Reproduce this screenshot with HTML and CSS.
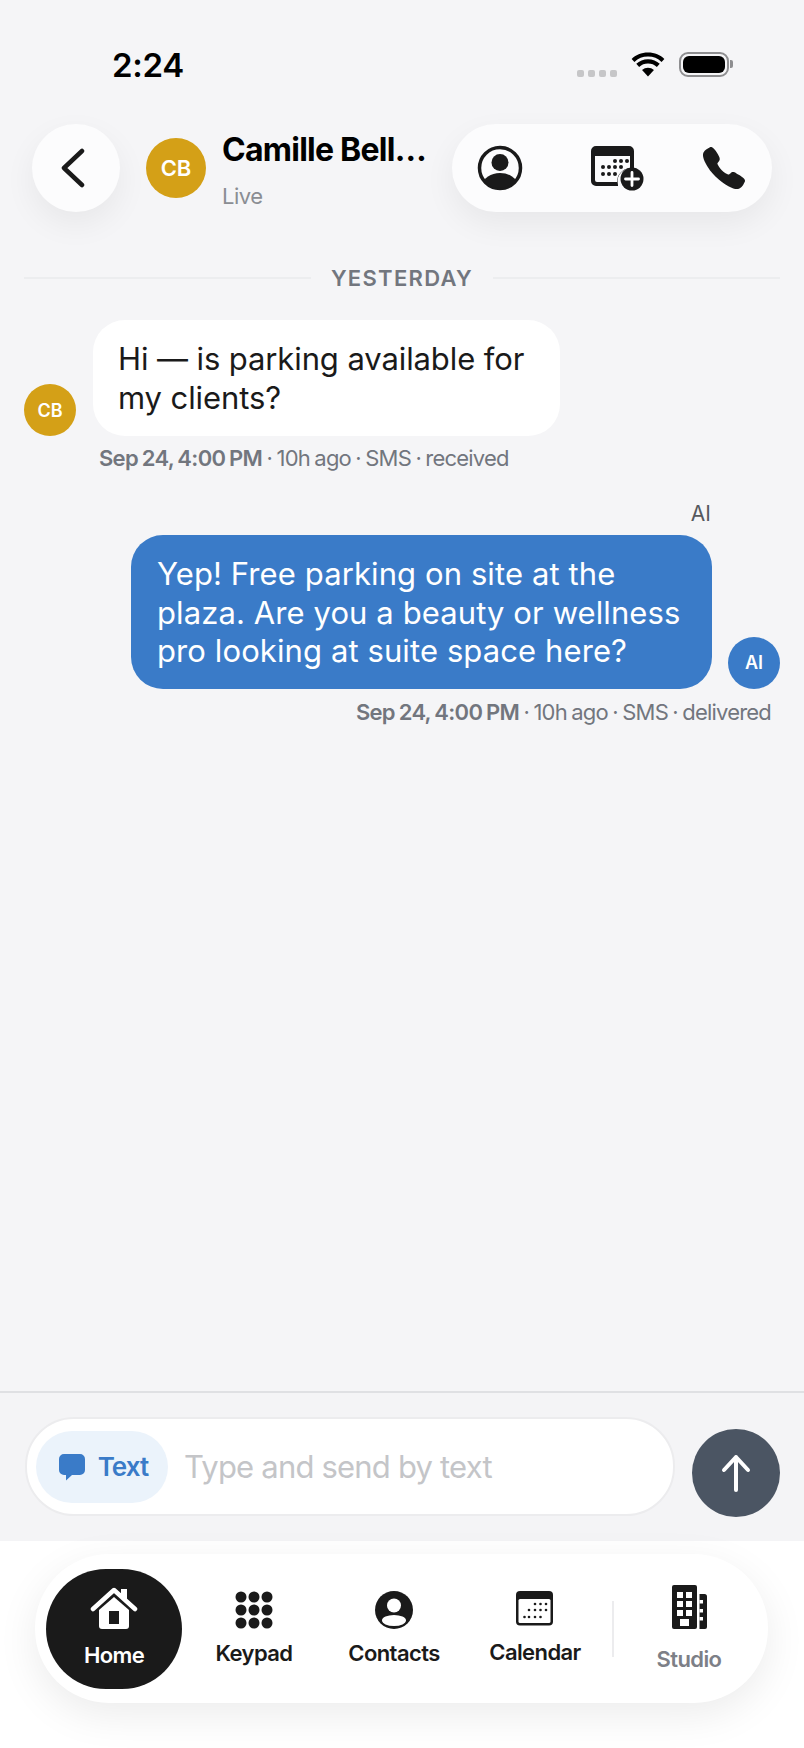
FILE: index.html
```html
<!DOCTYPE html>
<html lang="en">
<head>
<meta charset="utf-8">
<title>Camille Bell</title>
<link rel="stylesheet" href="styles.css">
</head>
<body>
<div class="screen">
  <div class="status">
    <span class="time">2:24</span>
    <div class="status-icons">
      <div class="signal"><i></i><i></i><i></i><i></i></div>
      <svg class="wifi" viewBox="0 0 34 26"><path d="M17 25.500 10.800 18.700a9.500 9.500 0 0 1 12.400 0z"/><path d="M17 8.500c4.800 0 9 1.800 12.200 4.800l-3 3.300a13.700 13.700 0 0 0-18.400 0l-3-3.300C8 10.300 12.200 8.500 17 8.500z" transform="translate(0 -1)"/><path d="M17 .5c6.900 0 13.100 2.600 17 6.800l-2.900 3.200A20 20 0 0 0 17 4.800 20 20 0 0 0 2.900 10.500L0 7.300C3.900 3.100 10.100.5 17 .5z"/></svg>
      <div class="battery"><div class="battery-fill"></div></div>
      <div class="battery-cap"></div>
    </div>
  </div>

  <header class="header">
    <button class="back" aria-label="Back">
      <svg viewBox="0 0 28 40" class="back-icon"><path d="M23 3 5 20l18 17"/></svg>
    </button>
    <div class="contact">
      <div class="avatar avatar-lg gold">CB</div>
      <div class="contact-text">
        <div class="name">Camille Bell…</div>
        <div class="live">Live</div>
      </div>
    </div>
    <div class="actions">
      <svg class="ic-person" viewBox="0 0 46 46"><defs><clipPath id="cp"><circle cx="23" cy="23" r="20"/></clipPath></defs><circle cx="23" cy="23" r="20.500" class="ring"/><circle cx="23" cy="17.500" r="8.500" class="solid"/><ellipse cx="23" cy="40" rx="17" ry="12" class="solid" clip-path="url(#cp)"/></svg>
      <svg class="ic-calplus" viewBox="0 0 54 46"><path class="solid" d="M5 1h33a5 5 0 0 1 5 5v18a13 13 0 0 0-16 16v1H5a5 5 0 0 1-5-5V6a5 5 0 0 1 5-5z"/><path d="M4 11h35v12a14 14 0 0 0-13 14H6a2 2 0 0 1-2-2z" fill="#fcfcfd"/><g class="solid"><circle cx="24" cy="16" r="2"/><circle cx="30" cy="16" r="2"/><circle cx="36" cy="16" r="2"/><circle cx="12" cy="22" r="2"/><circle cx="18" cy="22" r="2"/><circle cx="24" cy="22" r="2"/><circle cx="30" cy="22" r="2"/><circle cx="12" cy="29" r="2"/><circle cx="18" cy="29" r="2"/><circle cx="24" cy="29" r="2"/></g><circle cx="41" cy="34" r="11.500" class="solid"/><path d="M41 27.500v13M34.500 34h13" stroke="#fff" stroke-width="2.800" fill="none" stroke-linecap="round"/></svg>
      <svg class="ic-phone" viewBox="0 0 512 512"><path class="solid" d="M391 480c-19.520 0-46.940-7.060-88-30-49.930-28-88.550-53.850-138.210-103.380C116.910 298.770 93.610 267.790 61 208.450c-36.840-67-30.560-102.120-23.540-117.130C45.820 73.380 58.160 62.650 74.110 52a176.300 176.300 0 0 1 28.640-15.200c1-.43 1.930-.84 2.760-1.210 4.950-2.230 12.450-5.600 21.950-2 6.340 2.380 12 7.250 20.860 16 18.170 17.920 43 57.830 52.160 77.430 6.150 13.210 10.220 21.930 10.230 31.710 0 11.450-5.760 20.280-12.750 29.810-1.310 1.790-2.610 3.500-3.870 5.160-7.610 10-9.280 12.890-8.180 18.050 2.230 10.370 18.860 41.240 46.190 68.510s57.310 42.850 67.720 45.070c5.380 1.150 8.330-.59 18.650-8.470 1.480-1.130 3-2.300 4.590-3.470 10.660-7.930 19.080-13.540 30.260-13.540h.06c9.730 0 18.060 4.220 31.860 11.180 18 9.080 59.110 33.590 77.140 51.780 8.770 8.840 13.660 14.480 16.050 20.810 3.600 9.530.21 17-2 22-.37.830-.78 1.740-1.210 2.750a176.490 176.490 0 0 1-15.290 28.580c-10.630 15.900-21.400 28.210-39.380 36.580A67.420 67.420 0 0 1 391 480z"/></svg>
    </div>
  </header>

  <div class="day">
    <span class="day-line"></span>
    <span class="day-label">YESTERDAY</span>
    <span class="day-line"></span>
  </div>

  <main class="thread">
    <div class="msg-row">
      <div class="avatar avatar-sm gold">CB</div>
      <div class="bubble bubble-in">Hi — is parking available for<br>my clients?</div>
    </div>
    <div class="meta meta-in"><b>Sep 24, 4:00 PM</b> · 10h ago · SMS · received</div>

    <div class="sender">AI</div>
    <div class="msg-row msg-out">
      <div class="bubble bubble-out">Yep! Free parking on site at the<br>plaza. Are you a beauty or wellness<br>pro looking at suite space here?</div>
      <div class="avatar avatar-sm blue">AI</div>
    </div>
    <div class="meta meta-out"><b>Sep 24, 4:00 PM</b> · 10h ago · SMS · delivered</div>
  </main>

  <section class="composer">
    <div class="input">
      <div class="mode">
        <svg class="ic-bubble" viewBox="0 0 28 28"><path d="M6 1h16a5 5 0 0 1 5 5v11a5 5 0 0 1-5 5H14l-6 5.500V22H6a5 5 0 0 1-5-5V6a5 5 0 0 1 5-5z"/></svg>
        <span>Text</span>
      </div>
      <span class="placeholder">Type and send by text</span>
    </div>
    <button class="send" aria-label="Send">
      <svg viewBox="0 0 34 40" class="send-icon"><path d="M17 37V4M5 17 17 4l12 13"/></svg>
    </button>
  </section>

  <div class="dock">
    <nav class="nav">
      <div class="tab tab-active">
        <svg class="tab-ic ic-home" viewBox="0 0 48 46"><path fill="#fff" d="M31 3h6v11l-6-5z"/><path fill="#fff" d="M24 11 39 24v16a3 3 0 0 1-3 3H12a3 3 0 0 1-3-3V24z"/><path d="M3 23 24 4l21 19" fill="none" stroke="#fff" stroke-width="4.500" stroke-linecap="round" stroke-linejoin="round"/><rect x="19" y="25" width="10" height="13" fill="#1a1a1a"/></svg>
        <span>Home</span>
      </div>
      <div class="tab tab-keypad">
        <svg class="tab-ic" viewBox="0 0 38 38"><g class="solid"><circle cx="6" cy="6" r="5.500"/><circle cx="19" cy="6" r="5.500"/><circle cx="32" cy="6" r="5.500"/><circle cx="6" cy="19" r="5.500"/><circle cx="19" cy="19" r="5.500"/><circle cx="32" cy="19" r="5.500"/><circle cx="6" cy="32" r="5.500"/><circle cx="19" cy="32" r="5.500"/><circle cx="32" cy="32" r="5.500"/></g></svg>
        <span>Keypad</span>
      </div>
      <div class="tab">
        <svg class="tab-ic" viewBox="0 0 38 38"><circle cx="19" cy="19" r="19" class="solid"/><circle cx="19" cy="14.500" r="7" fill="#fff"/><ellipse cx="19" cy="29.500" rx="12" ry="5.500" fill="#fff"/></svg>
        <span>Contacts</span>
      </div>
      <div class="tab tab-cal">
        <svg class="tab-ic" viewBox="0 0 38 36"><rect x="0" y="0" width="37" height="34.500" rx="4" class="solid"/><rect x="2.500" y="8" width="32" height="24" rx="1.500" fill="#fff"/><g class="solid"><circle cx="19" cy="13" r="1.300"/><circle cx="24.500" cy="13" r="1.300"/><circle cx="30" cy="13" r="1.300"/><circle cx="13" cy="19" r="1.300"/><circle cx="19" cy="19" r="1.300"/><circle cx="24.500" cy="19" r="1.300"/><circle cx="30" cy="19" r="1.300"/><circle cx="8.500" cy="26" r="1.300"/><circle cx="13" cy="26" r="1.300"/><circle cx="19" cy="26" r="1.300"/><circle cx="24.500" cy="26" r="1.300"/></g></svg>
        <span>Calendar</span>
      </div>
      <div class="nav-sep"></div>
      <div class="tab tab-studio">
        <svg class="tab-ic" viewBox="0 0 35 44"><rect x="0" y="0" width="25" height="44" rx="2" class="solid"/><path class="solid" d="M27.500 9h5a2.500 2.500 0 0 1 2.500 2.500V42a2 2 0 0 1-2 2h-5.500z"/><g fill="#fff"><rect x="5" y="7" width="6" height="6"/><rect x="14" y="7" width="6" height="6"/><rect x="5" y="16" width="6" height="6"/><rect x="14" y="16" width="6" height="6"/><rect x="5" y="25" width="6" height="6"/><rect x="14" y="25" width="6" height="6"/><rect x="8" y="34" width="9" height="7"/><rect x="27.500" y="15" width="3.500" height="3.500"/><rect x="27.500" y="24" width="3.500" height="3.500"/><rect x="27.500" y="32" width="3.500" height="3.500"/></g></svg>
        <span>Studio</span>
      </div>
    </nav>
  </div>
</div>
</body>
</html>
```

FILE: styles.css
```css
* { box-sizing: border-box; }
html, body { margin: 0; padding: 0; }
body {
  background: #f5f5f7;
  font-family: Inter, "Liberation Sans", sans-serif;
  color: #1a1a1a;
}
.screen {
  width: 804px;
  height: 1748px;
  display: flex;
  flex-direction: column;
  overflow: hidden;
}
.solid { fill: #1a1a1a; }

/* status bar */
.status {
  height: 124px;
  padding: 44px 71px 0 112px;
  display: flex;
  justify-content: space-between;
  align-items: flex-start;
}
.time {
  font-size: 33px;
  line-height: 42px;
  font-weight: 600;
  color: #000;
  letter-spacing: -.3px;
}
.status-icons {
  display: flex;
  align-items: flex-start;
  padding-top: 8px;
}
.signal {
  display: flex;
  gap: 4px;
  margin-top: 18px;
  margin-right: 14px;
}
.signal i {
  width: 7px;
  height: 7px;
  border-radius: 2px;
  background: #c6c6c8;
}
.wifi { width: 34px; height: 25px; fill: #000; margin-right: 14px; }
.battery {
  width: 50px;
  height: 25px;
  border: 2px solid #8e8e90;
  border-radius: 9px;
  padding: 2px;
}
.battery-fill { width: 100%; height: 100%; background: #000; border-radius: 6px; }
.battery-cap {
  width: 3px;
  height: 8px;
  margin: 8px 0 0 1px;
  background: #8e8e90;
  border-radius: 0 2px 2px 0;
}

/* header */
.header {
  height: 88px;
  padding: 0 32px;
  display: flex;
  align-items: center;
}
.back {
  width: 88px;
  height: 88px;
  border: 0;
  padding: 0;
  border-radius: 50%;
  background: #fcfcfd;
  box-shadow: 0 12px 32px rgba(0, 0, 0, .06);
  display: flex;
  align-items: center;
  justify-content: center;
  flex: none;
}
.back-icon {
  width: 28px;
  height: 40px;
  fill: none;
  stroke: #1a1a1a;
  stroke-width: 4.500;
  stroke-linecap: round;
  stroke-linejoin: round;
  margin-right: 6px;
}
.contact {
  display: flex;
  align-self: flex-start;
  align-items: flex-start;
  margin-left: 26px;
  flex: 1;
  min-width: 0;
}
.avatar {
  border-radius: 50%;
  color: #fff;
  font-weight: 600;
  display: flex;
  align-items: center;
  justify-content: center;
  flex: none;
}
.gold { background: #d4a017; }
.blue { background: #3a7bc8; }
.avatar-lg { width: 60px; height: 60px; font-size: 22px; margin-top: 14px; }
.avatar-sm { width: 52px; height: 52px; font-size: 18px; }
.contact-text { margin-left: 16px; margin-top: 2px; }
.name {
  font-size: 32px;
  line-height: 48px;
  font-weight: 700;
  color: #000;
  white-space: nowrap;
  letter-spacing: -.75px;
}
.live {
  font-size: 22px;
  line-height: 28px;
  color: #8a8d93;
  margin-top: 8px;
  letter-spacing: -.5px;
}
.actions {
  width: 320px;
  height: 88px;
  flex: none;
  border-radius: 44px;
  background: #fcfcfd;
  box-shadow: 0 12px 32px rgba(0, 0, 0, .06);
  display: flex;
  align-items: center;
  padding-left: 25px;
}
.ic-person { width: 46px; height: 46px; flex: none; }
.ic-person .ring { fill: none; stroke: #1a1a1a; stroke-width: 3.500; }
.ic-calplus { width: 54px; height: 46px; flex: none; margin-left: 68px; margin-top: -1px; }
.ic-phone { width: 48px; height: 48px; flex: none; margin-left: 55px; }

/* day divider */
.day {
  display: flex;
  align-items: center;
  padding: 0 24px;
  margin-top: 52px;
  height: 28px;
  gap: 20px;
}
.day-line { flex: 1; height: 2px; background: #ecedef; }
.day-label {
  font-size: 22px;
  font-weight: 600;
  letter-spacing: 1.300px;
  color: #72767e;
}

/* thread */
.thread {
  flex: 1;
  padding: 28px 24px 0;
  display: flex;
  flex-direction: column;
}
.msg-row {
  display: flex;
  align-items: flex-end;
  gap: 17px;
}
.msg-out { justify-content: flex-end; gap: 16px; }
.bubble {
  font-size: 31px;
  line-height: 38.500px;
  padding: 20px 26px 18px;
  border-radius: 32px;
  white-space: nowrap;
  letter-spacing: .1px;
}
.bubble-in {
  width: 467px;
  padding: 20px 25px 19px;
  background: #fff;
  color: #1a1a1a;
  letter-spacing: -.1px;
}
.bubble-out {
  width: 581px;
  background: #3a7bc8;
  color: #fff;
}
.meta {
  font-size: 22px;
  line-height: 30px;
  color: #72767e;
  margin-top: 8px;
  letter-spacing: -.8px;
  word-spacing: -1px;
}
.meta b { font-weight: 600; letter-spacing: -.7px; }
.meta-in { padding-left: 75px; margin-top: 7px; }
.meta-out { text-align: right; padding-right: 9px; }
.sender {
  margin-top: 26px;
  padding-right: 69px;
  text-align: right;
  font-size: 21px;
  line-height: 30px;
  color: #55585e;
  margin-bottom: 6px;
}

/* composer */
.composer {
  height: 150px;
  border-top: 2px solid #dfe0e3;
  padding: 24px 24px 0 25px;
  display: flex;
  align-items: flex-start;
  gap: 17px;
  background: #f4f4f6;
}
.input {
  width: 651px;
  height: 99px;
  border-radius: 49px;
  background: #fff;
  border: 2px solid #ececee;
  padding: 11px 9px;
  display: flex;
  align-items: center;
}
.mode {
  width: 132px;
  height: 72px;
  border-radius: 36px;
  background: #ebf3fb;
  display: flex;
  align-items: center;
  justify-content: center;
  gap: 12px;
  color: #3a7bc8;
  font-size: 26px;
  font-weight: 600;
  flex: none;
  letter-spacing: -.9px;
  padding-left: 2px;
}
.ic-bubble { width: 28px; height: 28px; fill: #3a7bc8; flex: none; }
.placeholder {
  margin-left: 16px;
  font-size: 31px;
  color: #c4c5c8;
  white-space: nowrap;
  letter-spacing: -.8px;
}
.send {
  width: 88px;
  height: 88px;
  margin-top: 12px;
  border-radius: 50%;
  border: 0;
  padding: 0;
  background: #4b5563;
  display: flex;
  align-items: center;
  justify-content: center;
  flex: none;
}
.send-icon {
  width: 34px;
  height: 40px;
  fill: none;
  stroke: #fff;
  stroke-width: 4;
  stroke-linecap: round;
  stroke-linejoin: round;
}

/* bottom nav */
.dock {
  height: 207px;
  background: #fff;
  padding: 13px 36px 0 35px;
}
.nav {
  height: 149px;
  border-radius: 74px;
  background: #fff;
  box-shadow: 0 12px 40px rgba(0, 0, 0, .08);
  display: flex;
  align-items: center;
  padding-left: 11px;
}
.tab {
  width: 140px;
  display: flex;
  flex-direction: column;
  align-items: center;
  flex: none;
  font-size: 22px;
  line-height: 28px;
  font-weight: 600;
  color: #1a1a1a;
  letter-spacing: -.6px;
}
.tab-ic { width: 38px; height: 38px; display: block; margin-bottom: 10px; }
.tab-active {
  width: 136px;
  height: 120px;
  border-radius: 60px;
  background: #1a1a1a;
  color: #fff;
  justify-content: center;
  margin-right: 2px;
}
.ic-home { width: 48px; height: 46px; margin-bottom: 9px; margin-top: -2px; }
.tab-cal { margin-left: 1px; margin-top: -2px; }
.nav-sep {
  width: 2px;
  height: 56px;
  background: #ececee;
  margin-left: 7px;
  flex: none;
}
.tab-studio { width: 78px; margin-left: 36px; color: #7d8087; }
.tab-studio .tab-ic { width: 35px; height: 44px; margin-bottom: 16px; }
```
